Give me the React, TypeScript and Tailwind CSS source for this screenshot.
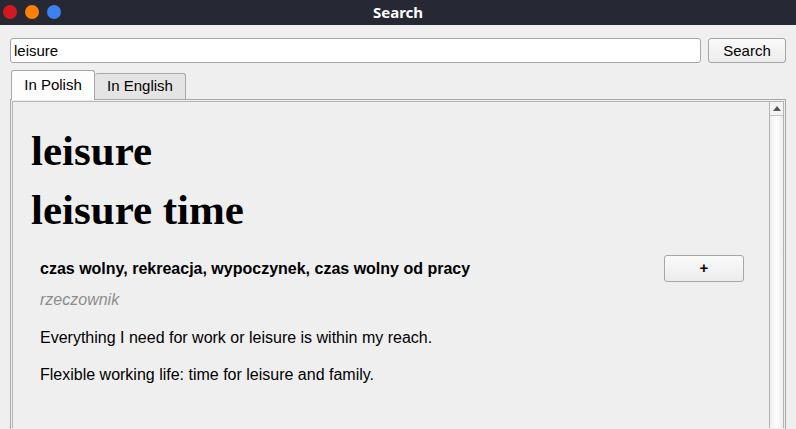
export default function App() {
  return (
    <div className="flex h-[429px] w-[796px] flex-col overflow-hidden bg-[#efefef] font-['Liberation_Sans',Arial,sans-serif]">
      {/* title bar */}
      <div className="relative flex h-[25px] shrink-0 items-center justify-center bg-[#262833]">
        <div className="absolute left-[3px] top-[5px] flex gap-[8px]">
          <span className="h-[14px] w-[14px] rounded-full bg-[#d2191f]" />
          <span className="h-[14px] w-[14px] rounded-full bg-[#fc8008]" />
          <span className="h-[14px] w-[14px] rounded-full bg-[#3b82f0]" />
        </div>
        <span className="font-['Noto_Sans',sans-serif] text-[15px] font-bold text-white">Search</span>
      </div>

      {/* search row */}
      <div className="mt-[13px] flex gap-[7px] px-[10px]">
        <input
          defaultValue="leisure"
          className="h-[25px] flex-1 rounded-[3px] border border-[#a6a6a6] bg-white px-[3px] text-[15px] text-black outline-none"
        />
        <button className="h-[25px] w-[78px] rounded-[3px] border border-[#a6a6a6] bg-gradient-to-b from-[#fafafa] to-[#ececec] pt-px text-[15px] text-black">
          Search
        </button>
      </div>

      {/* tabs */}
      <div className="mt-[7px] flex flex-1 flex-col px-[10px]">
        <div className="relative z-10 flex items-end pl-px">
          <div className="-mb-px flex h-[30px] w-[84px] items-center justify-center rounded-t-[3px] border border-b-0 border-[#a8a8a8] bg-[#fdfdfd] text-[15px] text-black">
            In Polish
          </div>
          <div className="flex h-[26px] w-[91px] items-center justify-center rounded-t-[3px] border border-b-0 border-l-0 border-[#a8a8a8] bg-[#e4e4e4] text-[15px] text-black">
            In English
          </div>
        </div>
        <div className="flex flex-1 border border-b-0 border-[#a8a8a8] p-px">
          <div className="flex flex-1 border border-b-0 border-[#b4b4b4]">
            <div className="flex-1 px-[18px] pt-[19px]">
              <h1 className="font-['Liberation_Serif',serif] text-[43px] font-bold leading-[59px] text-black">leisure</h1>
              <h1 className="font-['Liberation_Serif',serif] text-[43px] font-bold leading-[59px] text-black">leisure time</h1>
              <div className="mt-[16px] flex items-center justify-between pl-[9px] pr-[7px]">
                <span className="text-[16px] font-bold text-black">czas wolny, rekreacja, wypoczynek, czas wolny od pracy</span>
                <button className="h-[27px] w-[80px] rounded-[3px] border border-[#a6a6a6] bg-gradient-to-b from-[#fafafa] to-[#ececec] text-[15px] font-bold text-black">
                  +
                </button>
              </div>
              <p className="mt-[6px] pl-[9px] text-[16px] italic text-[#8c8c8c]">rzeczownik</p>
              <p className="mt-[14px] pl-[9px] text-[16px] text-black">Everything I need for work or leisure is within my reach.</p>
              <p className="mt-[13px] pl-[9px] text-[16px] text-black">Flexible working life: time for leisure and family.</p>
            </div>
            {/* scrollbar */}
            <div className="flex w-[14px] flex-col border-l border-[#b4b4b4] bg-[#f3f3f3]">
              <div className="flex h-[14px] items-center justify-center border-b border-[#c4c4c4]">
                <svg width="8" height="5" viewBox="0 0 8 5">
                  <path d="M0 5 L4 0 L8 5 Z" fill="#555" />
                </svg>
              </div>
              <div className="flex-1 bg-gradient-to-r from-[#f0f0f0] via-[#fdfdfd] to-[#ededed]" />
            </div>
          </div>
        </div>
      </div>
    </div>
  );
}
